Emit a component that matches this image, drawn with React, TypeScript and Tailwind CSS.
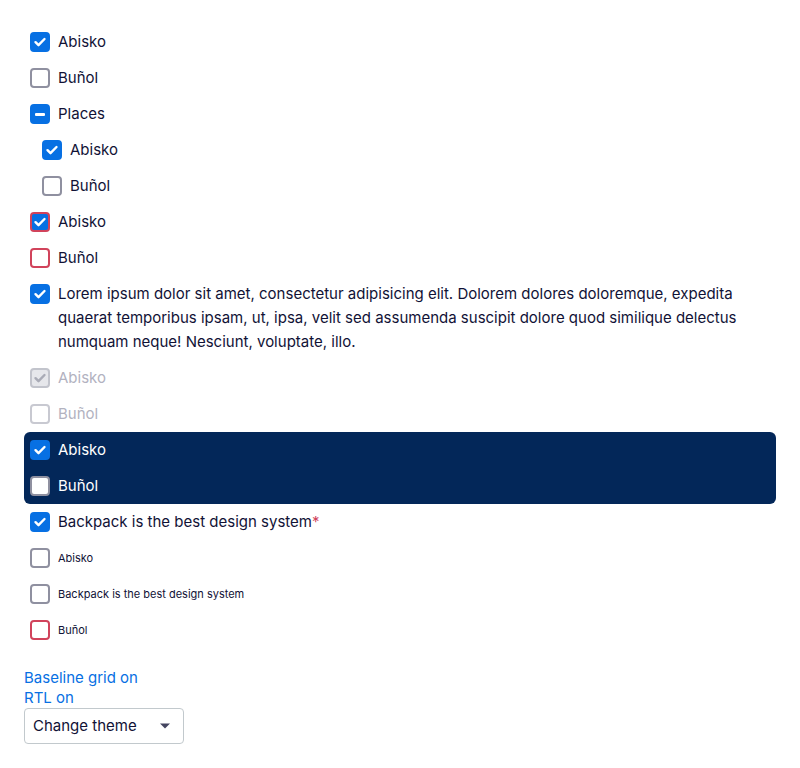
import React from "react";

type State = "checked" | "unchecked" | "indeterminate";

interface BoxProps {
  state: State;
  invalid?: boolean;
  disabled?: boolean;
  white?: boolean;
}

function Box({ state, invalid, disabled, white }: BoxProps) {
  const filled = state !== "unchecked" && !disabled;
  let cls = "border-2 border-[#8f90a0] bg-white";
  if (filled) cls = invalid ? "border-2 border-[#d1435b] bg-[#0770e3]" : "border-2 border-[#0770e3] bg-[#0770e3]";
  else if (invalid) cls = "border-2 border-[#d1435b] bg-white";
  else if (disabled && state === "checked") cls = "border-2 border-[#c2c4cc] bg-[#e6e7eb]";
  else if (disabled) cls = "border-2 border-[#c8c9d1] bg-white";
  else if (white) cls = "border-2 border-[#8f90a0] bg-white";

  return (
    <span className={`w-5 h-5 shrink-0 rounded-[4px] flex items-center justify-center ${cls}`}>
      {state === "checked" && (
        <svg viewBox="0 0 16 16" className="w-4 h-4" fill="none">
          <path
            d="M3.5 8.2l3 3 6-6.2"
            stroke={disabled ? "#a9abb6" : "#fff"}
            strokeWidth="2.4"
            strokeLinecap="round"
            strokeLinejoin="round"
          />
        </svg>
      )}
      {state === "indeterminate" && <span className="w-[10px] h-[3px] rounded-[1px] bg-white" />}
    </span>
  );
}

interface RowProps extends BoxProps {
  label: React.ReactNode;
  indent?: boolean;
  small?: boolean;
}

function Row({ label, indent, small, ...box }: RowProps) {
  let text = "text-[#111236]";
  if (box.disabled) text = "text-[#b2b2bf]";
  if (box.white) text = "text-white";
  return (
    <label className={`flex items-start gap-2 py-[6px] pl-[6px] pr-4 ${indent ? "ml-3" : ""}`}>
      <span className="h-6 flex items-center">
        <Box {...box} />
      </span>
      <span className={`${small ? "text-[11px] leading-6" : "text-[15px] leading-6"} ${text}`}>{label}</span>
    </label>
  );
}

export default function App() {
  return (
    <div className="min-h-screen bg-white px-6 pt-6 font-['Inter',sans-serif]">
      <Row state="checked" label="Abisko" />
      <Row state="unchecked" label="Buñol" />
      <Row state="indeterminate" label="Places" />
      <Row state="checked" label="Abisko" indent />
      <Row state="unchecked" label="Buñol" indent />
      <Row state="checked" invalid label="Abisko" />
      <Row state="unchecked" invalid label="Buñol" />
      <Row
        state="checked"
        label="Lorem ipsum dolor sit amet, consectetur adipisicing elit. Dolorem dolores doloremque, expedita quaerat temporibus ipsam, ut, ipsa, velit sed assumenda suscipit dolore quod similique delectus numquam neque! Nesciunt, voluptate, illo."
      />
      <Row state="checked" disabled label="Abisko" />
      <Row state="unchecked" disabled label="Buñol" />
      <div className="bg-[#032759] rounded-md">
        <Row state="checked" white label="Abisko" />
        <Row state="unchecked" white label="Buñol" />
      </div>
      <Row
        state="checked"
        label={
          <>
            Backpack is the best design system<span className="text-[#d1435b]">*</span>
          </>
        }
      />
      <Row state="unchecked" small label="Abisko" />
      <Row state="unchecked" small label="Backpack is the best design system" />
      <Row state="unchecked" invalid small label="Buñol" />

      <div className="mt-5 flex flex-col items-start text-[15px] leading-5 text-[#0770e3]">
        <span>Baseline grid on</span>
        <span>RTL on</span>
      </div>
      <button className="w-40 h-9 flex items-center justify-between pl-2 pr-3 border border-[#c2c9cd] rounded-[4px] bg-white text-[15px] text-[#111236]">
        <span>Change theme</span>
        <svg viewBox="0 0 12 8" className="w-3 h-2">
          <path d="M1 1.5h10L6 6.5z" fill="#444560" />
        </svg>
      </button>
    </div>
  );
}
